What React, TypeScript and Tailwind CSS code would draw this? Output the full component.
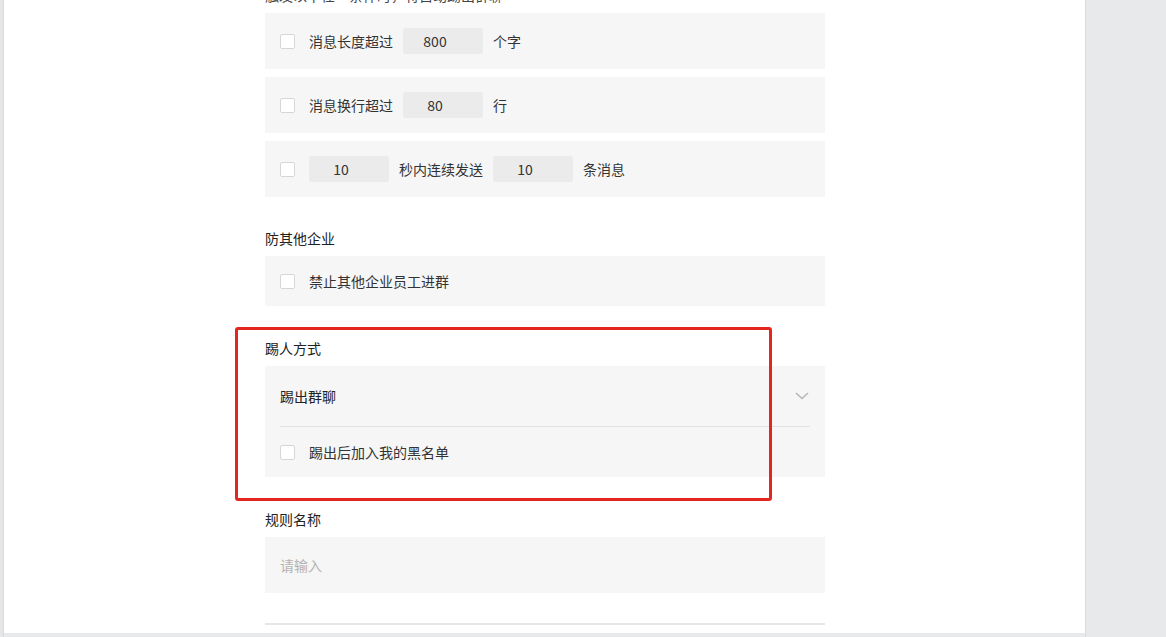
const font = { fontFamily: '"Noto Sans CJK SC", "Noto Sans", sans-serif' };

const Checkbox = () => (
  <span className="w-[15px] h-[15px] shrink-0 bg-white border border-[#d6d6d6] rounded-[2px]" />
);

const NumInput = ({ value }: { value: string }) => (
  <div className="w-[80px] h-[26px] bg-[#ebebeb] rounded-[2px] flex items-center justify-center pr-4 text-[14px] text-[#333]">
    {value}
  </div>
);

const Label = ({ children, className = "" }: { children: React.ReactNode; className?: string }) => (
  <div className={`h-[20px] leading-[20px] text-[14px] text-[#222] mb-2 ${className}`}>{children}</div>
);

const Card = ({ children }: { children: React.ReactNode }) => (
  <div className="h-[56px] bg-[#f6f6f6] flex items-center px-[15px] gap-[10px] text-[14px] text-[#333]">
    {children}
  </div>
);

export default function App() {
  return (
    <div className="relative flex h-[637px] w-[1166px] bg-[#e8e9eb] overflow-hidden" style={font}>
      <div className="w-[4px] h-full bg-[#e6e6e6] border-r border-[#dadada]" />
      <div className="w-[1081px] h-[633px] bg-white overflow-hidden">
        <div className="w-[560px] ml-[261px] mt-[-15px] flex flex-col">
          <Label className="text-[#444]">触发以下任一条件时，将自动踢出群聊</Label>
          <div className="flex flex-col gap-2">
            <Card>
              <Checkbox />
              <span className="ml-[4px]">消息长度超过</span>
              <NumInput value="800" />
              <span>个字</span>
            </Card>
            <Card>
              <Checkbox />
              <span className="ml-[4px]">消息换行超过</span>
              <NumInput value="80" />
              <span>行</span>
            </Card>
            <Card>
              <Checkbox />
              <div className="ml-[4px]">
                <NumInput value="10" />
              </div>
              <span>秒内连续发送</span>
              <NumInput value="10" />
              <span>条消息</span>
            </Card>
          </div>

          <Label className="mt-[31px]">防其他企业</Label>
          <div className="h-[50px] bg-[#f6f6f6] flex items-center px-[15px] gap-[14px] text-[14px] text-[#333]">
            <Checkbox />
            <span>禁止其他企业员工进群</span>
          </div>

          <Label className="mt-[32px]">踢人方式</Label>
          <div className="bg-[#f6f6f6] px-[15px]">
            <div className="h-[61px] flex items-center justify-between border-b border-[#e2e2e2] text-[14px] text-[#222]">
              <span>踢出群聊</span>
              <svg width="14" height="8" viewBox="0 0 14 8" className="mr-[1px]">
                <polyline points="1,1 7,6.5 13,1" fill="none" stroke="#b5b5b5" strokeWidth="1.4" />
              </svg>
            </div>
            <div className="h-[50px] flex items-center gap-[14px] text-[14px] text-[#333]">
              <Checkbox />
              <span>踢出后加入我的黑名单</span>
            </div>
          </div>

          <Label className="mt-[32px]">规则名称</Label>
          <div className="h-[56px] bg-[#f6f6f6] flex items-center px-[15px] text-[14px] text-[#b3b3b3]">
            请输入
          </div>
          <div className="mt-[30px] h-[2px] bg-[#e6e6e6]" />
        </div>
      </div>
      <div className="flex-1 h-full bg-[#e8e9eb] border-l border-[#dcdcdc]" />

      <div className="absolute left-[235px] top-[327px] w-[537px] h-[174px] border-[3px] border-[#e5261f] rounded-[3px] pointer-events-none" />
    </div>
  );
}
